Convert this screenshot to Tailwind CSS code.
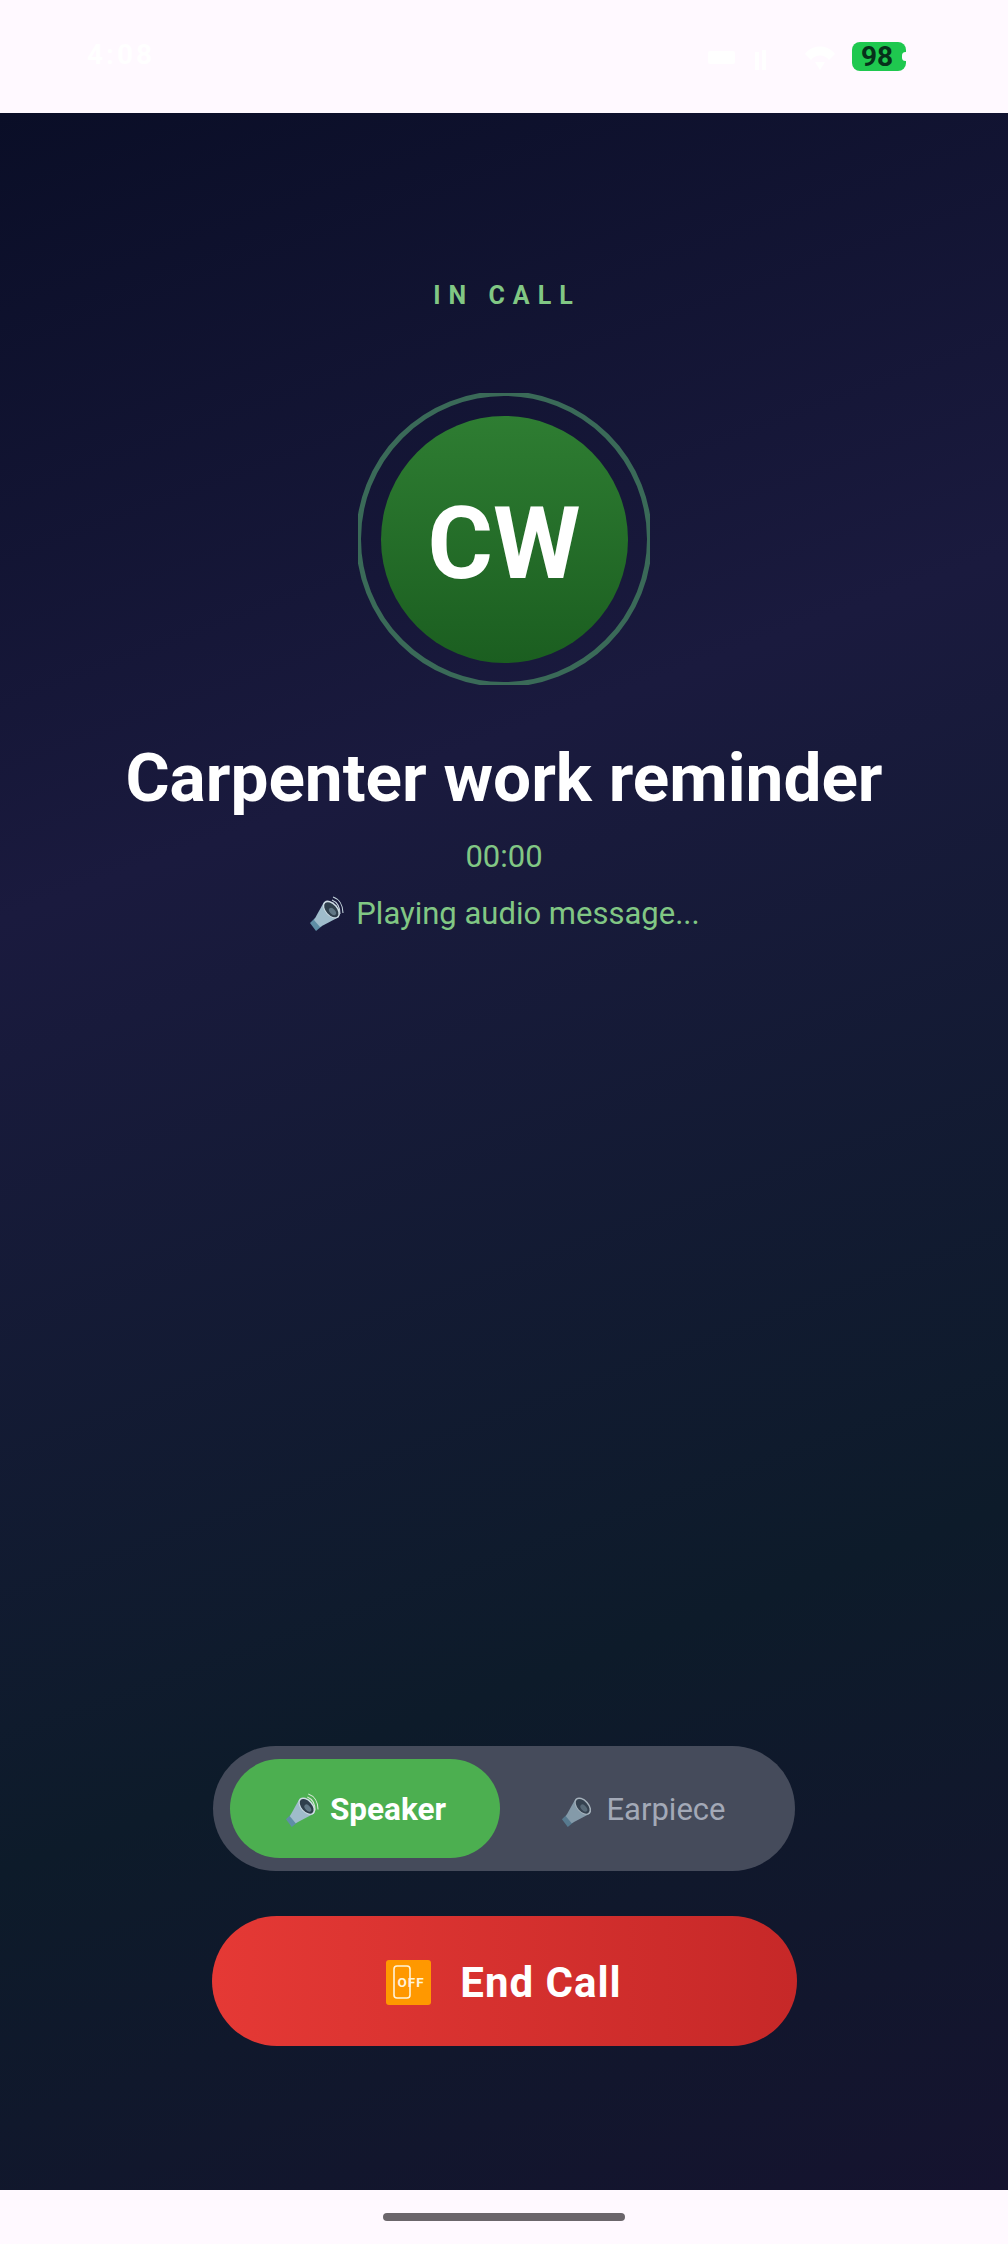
<!DOCTYPE html>
<html lang="en">
<head>
  <meta charset="UTF-8">
  <meta name="viewport" content="width=device-width, initial-scale=1.0">
  <title>In Call</title>
  <script src="https://cdn.jsdelivr.net/npm/@tailwindcss/browser@4"></script>
</head>
<body class="bg-[#fff9ff] font-['Roboto',sans-serif]">
  <svg class="hidden">
    <symbol id="speaker-cone" viewBox="0 0 36 36">
      <path d="M2 27 L8 35 L14 30 L7 22 Z" fill="#5f8ea6"/>
      <path d="M6 24 L16 6 C24 6 31 14 31 21 L12 31 Z" fill="#9fbccb"/>
      <ellipse cx="23.5" cy="13.5" rx="6.5" ry="10.5" transform="rotate(-42 23.5 13.5)" fill="#cfdde5"/>
      <ellipse cx="23.3" cy="13.7" rx="5.2" ry="9" transform="rotate(-42 23.3 13.7)" fill="#2f3f4c"/>
      <ellipse cx="24.5" cy="15.5" rx="2.6" ry="4.4" transform="rotate(-42 24.5 15.5)" fill="#607684"/>
    </symbol>
    <symbol id="speaker-waves" viewBox="0 0 36 36">
      <path d="M25 1 C31 3 35 9 35 17 M24 4 C29 6 32 11 32 18" fill="none" stroke="currentColor" stroke-width="1.1"/>
    </symbol>
  </svg>

  <div class="flex flex-col h-[2244px] w-[1008px] overflow-hidden">
    <!-- Status bar -->
    <div class="h-[113px] flex items-start justify-between pl-[87px] pr-[102px] pt-[40px]">
      <span class="text-white text-[28px] font-bold tracking-[3px] leading-[30px]">4:08</span>
      <div class="flex items-start gap-[17px] pt-[2px]">
        <svg class="w-[131px] h-[30px]" viewBox="0 0 131 30" fill="#ffffff">
          <rect x="4" y="9" width="27" height="13" rx="2"/>
          <rect x="51" y="10" width="4" height="18"/><rect x="58" y="8" width="4" height="20"/>
          <path d="M101 12 C108 2 124 2 131 12 L125 18 C121 12 111 12 107 18 Z"/>
          <path d="M111 20 L121 20 L116 28 Z"/>
        </svg>
        <div class="relative w-[54px] h-[29px] rounded-lg bg-[#1fc84f] flex items-center justify-center">
          <span class="text-[#07301a] text-[28px] font-bold leading-none pr-1">98</span>
          <span class="absolute right-[-3px] top-[10px] w-[7px] h-[9px] rounded-full bg-[#fff9ff]"></span>
        </div>
      </div>
    </div>

    <!-- Call screen -->
    <main class="flex-1 flex flex-col items-center bg-[linear-gradient(160deg,#0a0e27_0%,#1a1a3e_33%,#0d1b2a_72%,#15132f_100%)]">
      <p class="mt-[170px] text-[#81c784] text-[25px] font-bold tracking-[8px] leading-[26px] pl-[6px]">IN CALL</p>

      <div class="relative mt-[84px] w-[292px] h-[292px] overflow-hidden flex items-center justify-center">
        <div class="absolute left-[-2px] top-[-2px] w-[296px] h-[296px] rounded-full border-[5px] border-[#3a6a58]"></div>
        <div class="w-[247px] h-[247px] rounded-full bg-[linear-gradient(180deg,#2e7d32,#1b5e20)] flex items-center justify-center pt-[10px]">
          <span class="text-white text-[100px] font-bold leading-none">CW</span>
        </div>
      </div>

      <h1 class="mt-[53px] text-white text-[67.5px] font-bold leading-[80px]">Carpenter work reminder</h1>
      <p class="mt-[20px] text-[#81c784] text-[31px] leading-[38px]">00:00</p>
      <p class="mt-[19px] text-[#81c784] text-[31px] leading-[38px] flex items-center gap-[12px]">
        <svg class="w-[36px] h-[36px] text-[#c3d3dc]" viewBox="0 0 36 36">
          <use href="#speaker-cone"/>
          <use href="#speaker-waves"/>
        </svg>
        Playing audio message...
      </p>

      <!-- Audio route toggle -->
      <div class="mt-auto w-[582px] h-[125px] rounded-full bg-[#454b5b] px-[17px] flex items-center gap-2">
        <button class="w-[270px] h-[99px] rounded-full bg-[#4caf50] text-white text-[31.5px] font-bold flex items-center justify-center gap-[11px] pt-[3px]">
          <svg class="w-[35px] h-[35px] text-[#d5e8d6]" viewBox="0 0 36 36">
            <use href="#speaker-cone"/>
            <use href="#speaker-waves"/>
          </svg>
          Speaker
        </button>
        <button class="w-[270px] h-[99px] rounded-full text-[#a3a9b7] text-[31px] flex items-center justify-center gap-[11px] pt-[3px]">
          <svg class="w-[35px] h-[35px] opacity-70" viewBox="0 0 36 36"><use href="#speaker-cone"/></svg>
          Earpiece
        </button>
      </div>

      <button class="mt-[45px] mb-[144px] w-[585px] h-[130px] rounded-full bg-[linear-gradient(90deg,#e53935,#c62828)] text-white text-[42px] font-bold tracking-[1px] flex items-center justify-center gap-[29px] pt-[2px]">
        <svg class="w-[45px] h-[45px]" viewBox="0 0 45 45">
          <rect width="45" height="45" rx="3" fill="#ff9800"/>
          <rect x="8" y="6" width="16" height="32" rx="3" fill="none" stroke="#fff3d8" stroke-width="1.6"/>
          <text x="11.5" y="27" font-family="Roboto" font-size="13.5" fill="#fff3d8">OFF</text>
        </svg>
        End Call
      </button>
    </main>

    <!-- Home indicator -->
    <div class="h-[54px] flex justify-center pt-[23px]">
      <div class="w-[242px] h-[8px] rounded-full bg-[#6b666b]"></div>
    </div>
  </div>
</body>
</html>
